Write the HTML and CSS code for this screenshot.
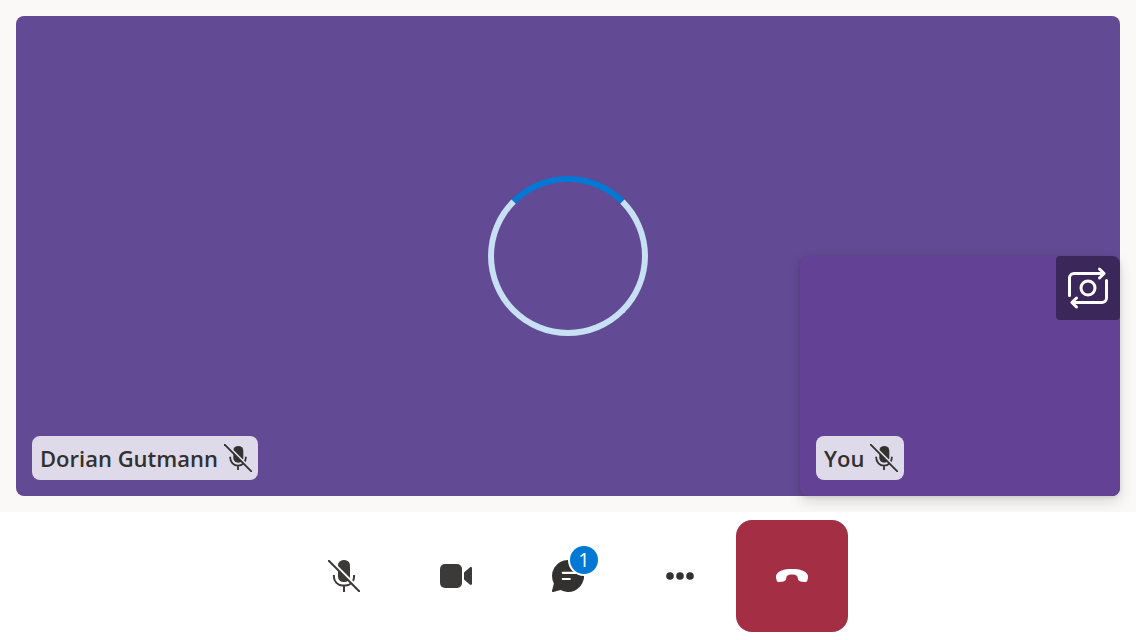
FILE: index.html
```html
<!DOCTYPE html>
<html lang="en">
<head>
<meta charset="utf-8">
<meta name="viewport" content="width=device-width, initial-scale=1">
<title>Call</title>
<link rel="stylesheet" href="styles.css">
</head>
<body>
<main class="stage">
  <section class="remote" aria-label="Dorian Gutmann">
    <div class="spinner" role="status" aria-label="Connecting"></div>
    <div class="name-tag">
      <span>Dorian Gutmann</span>
      <svg class="tag-icon" viewBox="0 0 28 28" aria-hidden="true">
        <mask id="tag-gap"><rect width="28" height="28" fill="#fff"/><path d="M1-1 29 27" stroke="#000" stroke-width="2.2"/></mask>
        <g mask="url(#tag-gap)"><rect x="9.3" y="1.9" width="10" height="16.8" rx="5" fill="#323130"/><path d="M6.2 12.8v1a7.8 7.8 0 0 0 15.6 0v-1M14 21.8V26" fill="none" stroke="#323130" stroke-width="1.8"/></g>
        <path d="m.7.7 26.6 26.6" stroke="#323130" stroke-width="1.8" stroke-linecap="round"/>
      </svg>
    </div>
  </section>
  <section class="local" aria-label="You">
    <button class="switch-camera" type="button" aria-label="Switch camera">
      <svg class="switch-icon" viewBox="0 0 64 64" fill="none" stroke="#fff" stroke-width="3" stroke-linecap="round" stroke-linejoin="round" aria-hidden="true">
        <path d="M13.5 39.500V22a4.500 4.500 0 0 1 4.500-4.500h30M43.500 13l4.600 4.500-4.600 4.500M50.500 24.500V42a4.500 4.500 0 0 1-4.500 4.500H16M20.500 42l-4.600 4.500 4.600 4.500"/>
        <circle cx="32" cy="32" r="7"/>
      </svg>
    </button>
    <div class="name-tag">
      <span>You</span>
      <svg class="tag-icon" viewBox="0 0 28 28" aria-hidden="true">
        <g mask="url(#tag-gap)"><rect x="9.3" y="1.9" width="10" height="16.8" rx="5" fill="#323130"/><path d="M6.2 12.8v1a7.8 7.8 0 0 0 15.6 0v-1M14 21.8V26" fill="none" stroke="#323130" stroke-width="1.8"/></g>
        <path d="m.7.7 26.6 26.6" stroke="#323130" stroke-width="1.8" stroke-linecap="round"/>
      </svg>
    </div>
  </section>
</main>
<footer class="controls">
  <button class="control" type="button" aria-label="Unmute">
    <svg class="control-icon" viewBox="0 0 32 32" aria-hidden="true">
      <mask id="mic-gap"><rect width="32" height="32" fill="#fff"/><path d="M1.2-1 33.2 31" stroke="#000" stroke-width="2.4"/></mask>
      <g mask="url(#mic-gap)"><rect x="10" y="0" width="12" height="22" rx="5.5" fill="#3b3a39"/><path d="M5.9 15v1.8A8.6 8.6 0 0 0 14.5 25.4h3a8.6 8.6 0 0 0 8.6-8.6V15M16 25.4V32" fill="none" stroke="#3b3a39" stroke-width="2"/></g>
      <path d="m.8.8 30.4 30.4" stroke="#3b3a39" stroke-width="2" stroke-linecap="round"/>
    </svg>
  </button>
  <button class="control" type="button" aria-label="Turn camera off">
    <svg class="control-icon" viewBox="0 0 32 32" fill="#3b3a39" aria-hidden="true">
      <rect y="4" width="22" height="24" rx="5"/>
      <path d="M24 12.4 29.8 7.4C30.7 6.7 32 7.1 32 8.2v15.6c0 1.1-1.3 1.5-2.2.8L24 19.6Z"/>
    </svg>
  </button>
  <button class="control" type="button" aria-label="Chat, 1 unread message">
    <span class="chat">
      <svg class="control-icon" viewBox="0 0 32 32" aria-hidden="true">
        <path d="M16 0a16 16 0 1 1-7.5 30.1L1.3 32A1.1 1.1 0 0 1 0 30.7L1.9 23.5A16 16 0 0 1 16 0Z" fill="#323130"/>
        <path d="M10.8 12.8h13M10.8 19h7" stroke="#fff" stroke-width="2.2" stroke-linecap="round"/>
      </svg>
      <span class="badge">1</span>
    </span>
  </button>
  <button class="control" type="button" aria-label="More">
    <svg class="control-icon" viewBox="0 0 32 32" fill="#323130" aria-hidden="true">
      <circle cx="6" cy="16" r="3.8"/><circle cx="16" cy="16" r="3.8"/><circle cx="26" cy="16" r="3.8"/>
    </svg>
  </button>
  <button class="control hang-up" type="button" aria-label="Leave call">
    <svg class="control-icon" viewBox="0 0 32 32" fill="#fff" aria-hidden="true">
      <path d="M16 9C24 9 30 11 31.6 14.8C32.3 16.5 32 19 31.2 20.7C30.6 21.9 29.6 22.3 28.3 22.1L24.5 21.5C23.1 21.3 22.3 20.4 22 19.1L21.2 15.9C19.6 15 17.8 14.6 16 14.6C14.2 14.6 12.4 15 10.8 15.9L10 19.1C9.7 20.4 8.9 21.3 7.5 21.5L3.7 22.1C2.4 22.3 1.4 21.9.8 20.7C0 19-.3 16.5.4 14.8C2 11 8 9 16 9Z"/>
    </svg>
  </button>
</footer>
</body>
</html>
```
FILE: styles.css
```css
* { box-sizing: border-box; }

body {
  margin: 0;
  min-height: 100vh;
  display: flex;
  flex-direction: column;
  background: #fff;
  color: #323130;
  font-family: "Open Sans", "Noto Sans", sans-serif;
}

button {
  margin: 0;
  padding: 0;
  border: 0;
  background: transparent;
  font: inherit;
  cursor: pointer;
}

svg { display: block; }

.stage {
  position: relative;
  flex: 1;
  display: flex;
  padding: 16px;
  background: #faf9f8;
  overflow: hidden;
}

.remote {
  position: relative;
  flex: 1;
  display: grid;
  place-items: center;
  border-radius: 8px;
  background: #634a95;
}

.spinner {
  width: 160px;
  height: 160px;
  border: 6px solid #c7e0f4;
  border-top-color: #0078d4;
  border-radius: 50%;
}

.name-tag {
  position: absolute;
  left: 16px;
  bottom: 16px;
  display: flex;
  align-items: center;
  gap: 6px;
  height: 44px;
  padding: 0 6px 0 8px;
  border-radius: 8px;
  background: #dfdae9;
  font-size: 22px;
  font-weight: 600;
  line-height: 32px;
  white-space: nowrap;
}

.tag-icon { width: 28px; height: 28px; }

.local {
  position: absolute;
  right: 16px;
  bottom: 16px;
  width: 320px;
  height: 240px;
  border-radius: 8px;
  background: #634195;
  box-shadow: 0 6px 14px rgba(0, 0, 0, 0.13), 0 1px 4px rgba(0, 0, 0, 0.11);
}

.switch-camera {
  position: absolute;
  top: 0;
  right: 0;
  border-radius: 4px 8px 4px 4px;
  background: #3b275a;
}

.switch-icon { width: 64px; height: 64px; }

.controls {
  position: relative;
  display: flex;
  justify-content: center;
  padding: 8px;
  background: #fff;
}

.control {
  display: grid;
  place-items: center;
  width: 112px;
  height: 112px;
  border-radius: 16px;
}

.control-icon { width: 32px; height: 32px; }

.chat { position: relative; }

.badge {
  position: absolute;
  top: -16px;
  right: -16px;
  width: 32px;
  height: 32px;
  border: 2px solid #fff;
  border-radius: 50%;
  background: #0078d4;
  color: #fff;
  font-size: 20px;
  line-height: 28px;
  text-align: center;
}

.hang-up { background: #a42e43; }
```
